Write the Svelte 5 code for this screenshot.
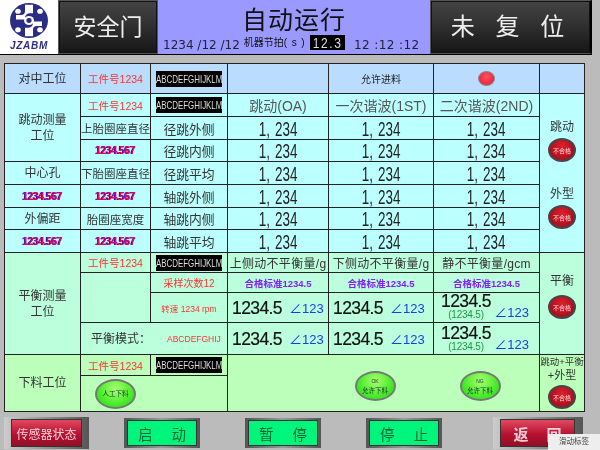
<script>
  const ns = 'ABCDEFGHIJKLM';
  const val = '1, 234';
  const mag = '1234.567';

  // rows of the runout block; the left column is merged in the first two
  const runout = [
    { a: '上胎圈座直径', name: '径跳外侧' },
    { a: mag, aMag: true, name: '径跳内侧' },
    { left: '中心孔', a: '下胎圈座直径', name: '径跳平均' },
    { left: mag, leftMag: true, a: mag, aMag: true, name: '轴跳外侧' },
    { left: '外偏距', a: '胎圈座宽度', name: '轴跳内侧' },
    { left: mag, leftMag: true, a: mag, aMag: true, name: '轴跳平均' },
  ];
</script>

<div class="page">
  <header class="top">
    <div class="logo">
      <svg viewBox="6 5 38 38" width="38" height="35" preserveAspectRatio="none">
        <circle cx="25" cy="24" r="19" fill="#2b2d85" />
        <path d="M21 7h8v9h-3a5 5 0 0 0-5 5v2h-9v-5h5a4 4 0 0 0 4-4z" fill="#fff" />
        <path d="M29 41h-8v-9h3a5 5 0 0 0 5-5v-2h9v5h-5a4 4 0 0 0-4 4z" fill="#fff" />
        <circle cx="25" cy="24" r="5" fill="#fff" />
        <circle cx="25" cy="24" r="2.6" fill="#2b2d85" />
        <circle cx="14" cy="14" r="2.8" fill="#fff" />
        <circle cx="36" cy="14" r="2.8" fill="#fff" />
        <circle cx="14" cy="34" r="2.8" fill="#fff" />
        <circle cx="36" cy="34" r="2.8" fill="#fff" />
      </svg>
      <span class="brand">JZABM</span>
    </div>
    <div class="darkbtn door">安全门</div>
    <div class="status">
      <div class="title">自动运行</div>
      <div class="info">
        <span class="date">1234 /12 /12</span>
        <span class="beat">机器节拍<span class="unit">(s)</span></span>
        <span class="lcd"><span>12.3</span></span>
        <span class="date time">12 :12 :12</span>
      </div>
    </div>
    <div class="darkbtn reset">未 复 位</div>
  </header>

  <div class="sheet">
    <!-- centering station -->
    <div class="c blue lbl">对中工位</div>
    <div class="c blue red">工件号1234</div>
    <div class="c blue"><span class="tag"><span>{ns}</span></span></div>
    <div class="c blue"></div>
    <div class="c blue small">允许进料</div>
    <div class="c blue"><span class="led"></span></div>
    <div class="c blue"></div>

    <!-- runout station -->
    <div class="c cyan lbl area-runout">跳动测量<br />工位</div>
    <div class="c cyan red">工件号1234</div>
    <div class="c cyan"><span class="tag"><span>{ns}</span></span></div>
    <div class="c cyan head">跳动(OA)</div>
    <div class="c cyan head">一次谐波(1ST)</div>
    <div class="c cyan head">二次谐波(2ND)</div>
    <div class="c cyan side side-runout">
      <span class="lbl">跳动</span>
      <span class="nok">不合格</span>
      <span class="lbl gap">外型</span>
      <span class="nok">不合格</span>
    </div>

    {#each runout as r}
      {#if r.left}
        <div class="c cyan" class:mag={r.leftMag} class:lbl={!r.leftMag}>{r.left}</div>
      {/if}
      <div class="c cyan" class:mag={r.aMag} class:tire={!r.aMag}>{r.a}</div>
      <div class="c cyan name">{r.name}</div>
      {#each [0, 1, 2] as _}
        <div class="c cyan"><span class="num">{val}</span></div>
      {/each}
    {/each}

    <!-- balance station -->
    <div class="c mint lbl area-balance">平衡测量<br />工位</div>
    <div class="c mint red">工件号1234</div>
    <div class="c mint"><span class="tag"><span>{ns}</span></span></div>
    <div class="c mint head2">上侧动不平衡量/g</div>
    <div class="c mint head2">下侧动不平衡量/g</div>
    <div class="c mint head2">静不平衡量/gcm</div>
    <div class="c mint side side-balance">
      <span class="lbl">平衡</span>
      <span class="nok">不合格</span>
    </div>

    <div class="c mint area-blank"></div>
    <div class="c mint red tiny">采样次数12</div>
    <div class="c mint std">合格标准1234.5</div>
    <div class="c mint std">合格标准1234.5</div>
    <div class="c mint std">合格标准1234.5</div>

    <div class="c mint rpm">转速 1234 rpm</div>
    <div class="c mint amt"><b>1234.5</b><i>∠123</i></div>
    <div class="c mint amt"><b>1234.5</b><i>∠123</i></div>
    <div class="c mint amt2">
      <div class="col"><b>1234.5</b><em>(1234.5)</em></div>
      <i>∠123</i>
    </div>

    <div class="c mint mode">
      <span class="lbl">平衡模式：</span>
      <span class="rpm">ABCDEFGHIJ</span>
    </div>
    <div class="c mint amt"><b>1234.5</b><i>∠123</i></div>
    <div class="c mint amt"><b>1234.5</b><i>∠123</i></div>
    <div class="c mint amt2">
      <div class="col"><b>1234.5</b><em>(1234.5)</em></div>
      <i>∠123</i>
    </div>

    <!-- unloading station -->
    <div class="c lime lbl area-unload">下料工位</div>
    <div class="c lime red">工件号1234</div>
    <div class="c lime"><span class="tag"><span>{ns}</span></span></div>
    <div class="c lime unload">
      <span class="ok"><small>OK</small>允许下料</span>
      <span class="ok"><small>NG</small>允许下料</span>
    </div>
    <div class="c lime side total">
      <span class="mixed">跳动+平衡</span>
      <span class="mixed big">+外型</span>
      <span class="nok">不合格</span>
    </div>
    <div class="c lime manual">
      <span class="ok">人工下料</span>
    </div>
  </div>

  <footer class="bottom">
    <div class="frame wide"><button class="crim sensor">传感器状态</button></div>
    <div class="frame"><button class="go">启 动</button></div>
    <div class="frame"><button class="go">暂 停</button></div>
    <div class="frame"><button class="go">停 止</button></div>
    <div class="frame wide back"><button class="crim ret">返 回</button></div>
    <span class="hint">滑动标签</span>
  </footer>
</div>

<style>
  :global(body) {
    margin: 0;
    background: #bbb;
    font-family: "Liberation Sans", "Noto Sans CJK SC", sans-serif;
  }

  .page {
    width: 600px;
    height: 450px;
    overflow: hidden;
    position: relative;
    background: #bbb;
    filter: blur(0.3px);
  }

  .top {
    display: flex;
    height: 55px;
    width: 592px;
    box-sizing: border-box;
    border-bottom: 1px solid #000;
  }

  .logo {
    width: 58px;
    display: flex;
    flex-direction: column;
    align-items: center;
    background: #fff;
    padding-top: 3px;
    box-sizing: border-box;
  }

  .logo svg {
    flex: none;
  }

  .brand {
    font: italic bold 10px/10px "Liberation Sans", sans-serif;
    letter-spacing: 0.7px;
    color: #2b2d85;
    margin-top: 3px;
  }

  .darkbtn {
    display: flex;
    align-items: center;
    justify-content: center;
    color: #eee;
    background: linear-gradient(#444 0%, #333 40%, #161616 100%);
    border: 1px solid #555;
    box-shadow: 0 0 0 1px #111 inset;
    box-sizing: border-box;
  }

  .door {
    width: 100px;
    font-size: 23px;
    padding-bottom: 4px;
  }

  .reset {
    flex: 1;
    font-size: 24px;
    word-spacing: 14px;
    padding: 0 6px 5px 0;
    border-right: 2px solid #000;
  }

  .status {
    width: 272px;
    background: #9999ff;
    display: flex;
    flex-direction: column;
    align-items: center;
    color: #111;
  }

  .title {
    font-size: 25px;
    line-height: 30px;
    margin-top: 5px;
    letter-spacing: 1px;
  }

  .info {
    display: flex;
    align-items: flex-start;
    font-size: 10px;
    width: 100%;
    padding-left: 5px;
    box-sizing: border-box;
  }

  .date {
    font-family: "DejaVu Sans", sans-serif;
    font-size: 12px;
    line-height: 14px;
    margin-top: 3px;
    color: #223;
    white-space: nowrap;
  }

  .beat {
    margin-left: 4px;
    line-height: 14px;
    margin-top: 1px;
    white-space: nowrap;
  }

  .unit {
    letter-spacing: 4.5px;
  }

  .lcd {
    background: #000;
    color: #ddd;
    width: 35px;
    height: 15px;
    margin-left: 1px;
    display: flex;
    align-items: center;
    justify-content: center;
  }

  .lcd span {
    font: 15px "Liberation Sans", sans-serif;
    transform: scaleX(0.8);
    letter-spacing: 2px;
  }

  .time {
    margin-left: 9px;
    letter-spacing: 0.4px;
  }

  .sheet {
    display: grid;
    grid-template-columns: 75px 69px 76px 100px 104px 105px 44px;
    grid-template-rows: 29px 22px 22px 21px 22px 22px 21px 22px 19px 19px 29px 31px 20px 35px;
    gap: 1px;
    width: 579px;
    margin: 8px 0 0 4px;
    padding: 1px;
    background: #222;
  }

  .area-runout { grid-area: 2 / 1 / 5 / 2; }
  .side-runout { grid-area: 2 / 7 / 9 / 8; }
  .area-balance { grid-area: 9 / 1 / 13 / 2; }
  .side-balance { grid-area: 9 / 7 / 13 / 8; }
  .area-blank { grid-area: 10 / 2 / 12 / 3; }
  .mode { grid-area: 12 / 2 / 13 / 4; }
  .area-unload { grid-area: 13 / 1 / 15 / 2; }
  .unload { grid-area: 13 / 4 / 15 / 7; }
  .total { grid-area: 13 / 7 / 15 / 8; }
  .manual { grid-area: 14 / 2 / 15 / 4; }

  .c {
    display: flex;
    align-items: center;
    justify-content: center;
    min-width: 0;
    overflow: hidden;
    white-space: nowrap;
    color: #333;
    font-size: 12px;
  }

  .blue { background: #b9dcff; }
  .cyan { background: #bbffff; }
  .mint { background: #bbffdd; }
  .lime { background: #bbffbb; }

  .lbl {
    font-size: 12px;
    color: #333;
    text-align: center;
    line-height: 16px;
  }

  .tire {
    font-size: 11.5px;
  }

  .red {
    color: #f33;
    font-size: 10.5px;
  }

  .tiny {
    font-size: 10px;
  }

  .rpm {
    font-size: 8.5px;
    color: #f33;
  }

  .tag {
    background: #000;
    color: #ddd;
    width: 66px;
    height: 16px;
    display: flex;
    align-items: center;
    justify-content: center;
  }

  .tag span {
    font-size: 11px;
    transform: scaleX(0.72);
  }

  .small {
    font-size: 10px;
    color: #222;
  }

  .head {
    font-size: 14px;
    color: #555;
  }

  .head2 {
    font-size: 12px;
    color: #333;
    letter-spacing: 0.3px;
  }

  .name {
    font-size: 12.8px;
    color: #333;
  }

  .num {
    display: inline-block;
    font-size: 21px;
    line-height: 21px;
    color: #222;
    word-spacing: 2px;
    transform: scaleX(0.64);
  }

  .mag {
    font-size: 10px;
    font-weight: 700;
    letter-spacing: -0.3px;
    color: #e8004a;
    text-shadow: -1px 0 #30c;
  }

  .std {
    font-size: 9.5px;
    font-weight: 700;
    color: #8020ff;
  }

  .side {
    flex-direction: column;
    justify-content: flex-start;
  }

  .side-runout {
    padding-top: 25px;
    box-sizing: border-box;
  }

  .side-balance {
    padding-top: 20px;
    box-sizing: border-box;
  }

  .side-balance .nok {
    margin-top: 6px;
  }

  .total {
    padding-top: 1px;
    box-sizing: border-box;
  }

  .mixed {
    font-size: 9.5px;
    line-height: 12px;
    color: #333;
  }

  .big {
    font-size: 11px;
    line-height: 14px;
  }

  .gap {
    margin-top: 24px;
  }

  .nok {
    width: 28px;
    height: 24px;
    border-radius: 50%;
    margin-top: 3px;
    display: flex;
    flex: none;
    align-items: center;
    justify-content: center;
    color: #fdd;
    font-size: 6px;
    background: radial-gradient(ellipse at 50% 35%, #e0202c 0%, #a80e1c 75%);
    border: 2px solid #4a4448;
    box-sizing: border-box;
  }

  .led {
    width: 17px;
    height: 15px;
    border-radius: 50%;
    background: radial-gradient(ellipse at 50% 35%, #ff5060, #e81830);
    border: 1px solid #888;
    box-sizing: border-box;
  }

  .amt {
    justify-content: flex-start;
    padding-left: 4px;
    gap: 7px;
  }

  b {
    font-size: 17.5px;
    font-weight: 400;
    line-height: 16px;
    letter-spacing: -0.6px;
    color: #111;
    -webkit-text-stroke: 0.2px #111;
  }

  i {
    font-size: 13px;
    font-style: normal;
    color: #1a3cf0;
  }

  .amt2 {
    justify-content: space-between;
    align-items: flex-end;
    padding: 0 10px 1px 7px;
  }

  .col {
    display: flex;
    flex-direction: column;
    align-items: center;
    line-height: 12px;
  }

  em {
    font-size: 10px;
    font-style: normal;
    color: #1a9c3a;
    letter-spacing: -0.2px;
  }

  .mode {
    justify-content: flex-start;
    padding-left: 10px;
    gap: 16px;
  }

  .unload {
    gap: 64px;
    padding: 6px 0 0 88px;
    box-sizing: border-box;
  }

  .manual {
    justify-content: flex-start;
    padding-left: 14px;
  }

  .ok {
    width: 41px;
    height: 30px;
    border-radius: 50%;
    display: flex;
    flex-direction: column;
    align-items: center;
    justify-content: center;
    font-size: 6.5px;
    line-height: 9px;
    color: #133;
    background: radial-gradient(ellipse at 50% 30%, #a8ff70, #3ce820 70%);
    border: 2px solid #777;
    box-sizing: border-box;
  }

  .ok small {
    font-size: 5px;
  }

  .bottom {
    display: flex;
    align-items: center;
    height: 32px;
    margin-top: 5px;
    padding-left: 4px;
  }

  .frame {
    width: 76px;
    height: 30px;
    margin-right: 45px;
    padding: 2px 3px;
    box-sizing: border-box;
    background: linear-gradient(90deg, #555, #999 50%, #555);
    display: flex;
    flex: none;
  }

  .frame.wide {
    width: 85px;
    height: 32px;
    padding: 2px 7px;
    margin-right: 35px;
    background: linear-gradient(90deg, #ccc, #555);
  }

  .frame.back {
    width: 90px;
    margin: 0 0 0 6px;
    padding-right: 8px;
  }

  button {
    flex: 1;
    min-width: 0;
    border: 1px solid #333;
    padding: 0;
    font-family: inherit;
    font-size: 14.5px;
  }

  .go {
    background: #00f57c;
    color: #063;
    word-spacing: 15px;
  }

  .crim {
    background: linear-gradient(#e04a60, #b81030 55%, #901028);
    color: #f6d0d8;
  }

  .sensor {
    font-size: 12px;
  }

  .ret {
    font-size: 15px;
    font-weight: 700;
    word-spacing: 14px;
  }

  .hint {
    position: absolute;
    right: 0;
    bottom: 0;
    width: 52px;
    height: 16px;
    line-height: 16px;
    text-align: center;
    font-size: 7.5px;
    color: #444;
    background: #eee;
  }
</style>
